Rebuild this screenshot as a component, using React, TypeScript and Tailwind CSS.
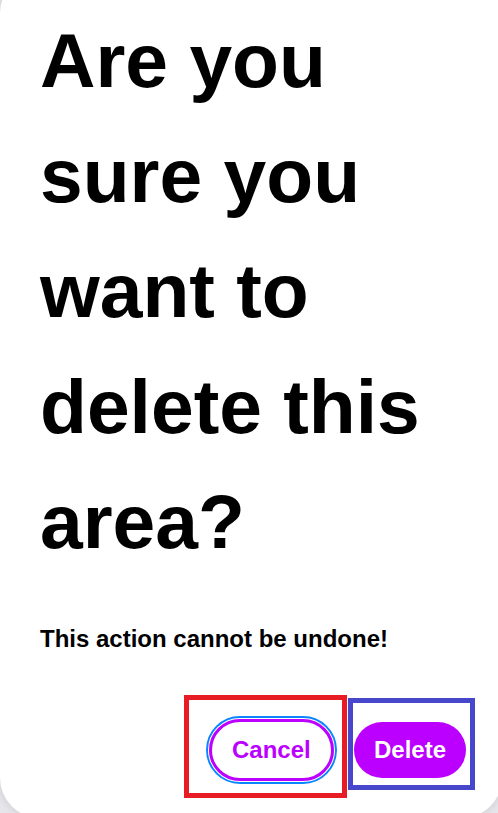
import React from 'react';

const font = { fontFamily: '"Liberation Sans", Arial, sans-serif' };

export default function App() {
  return (
    <div className="h-[813px] w-[498px] overflow-hidden bg-[#e6e6ea]" style={font}>
      <div className="-mt-[27px] h-[845px] w-[502px] rounded-[40px] bg-white pl-[40px] pr-[27px] pt-[30px] shadow-[0_0_8px_rgba(0,0,0,0.12)]">
        <h1 className="w-[420px] text-[76.8px] font-bold leading-[115.2px] text-black">
          Are you sure you want to delete this area?
        </h1>
        <p className="mt-[42px] text-[24px] font-bold leading-[36px] text-black">This action cannot be undone!</p>
        <div className="mt-[38px] flex items-start justify-end gap-[1px]">
          <div className="h-[103px] w-[163px] border-[5px] border-[#e81c24] pl-[20px] pt-[19px]">
            <button className="rounded-full border-[3px] border-[#bb00ff] bg-white px-[20px] py-[16px] text-[24px] font-bold leading-[24px] text-[#bb00ff] outline-2 outline-offset-[1px] outline-[#0a84ff]">
              Cancel
            </button>
          </div>
          <div className="mt-[3px] h-[92px] w-[127px] border-[5px] border-[#4747cc] pl-[1px] pt-[19px]">
            <button className="rounded-full bg-[#bb00ff] px-[20px] py-[16px] text-[24px] font-bold leading-[24px] text-white">
              Delete
            </button>
          </div>
        </div>
      </div>
    </div>
  );
}
